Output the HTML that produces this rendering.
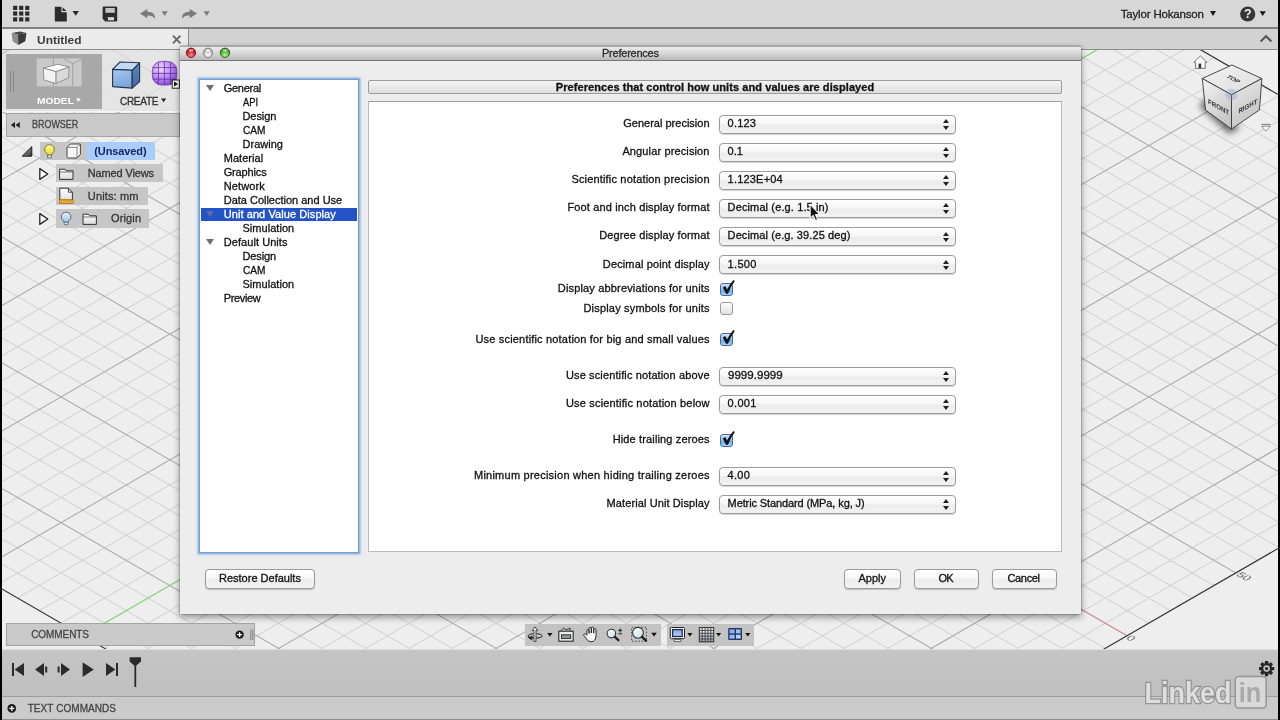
<!DOCTYPE html>
<html lang="en"><head><meta charset="utf-8"><title>Preferences</title>
<style>
html,body{margin:0;padding:0}
body{width:1280px;height:720px;overflow:hidden;background:#000;position:relative;font-family:"Liberation Sans",sans-serif;font-size:11px;color:#1a1a1a}
.abs{position:absolute}
.t{position:absolute;white-space:pre;line-height:1;transform-origin:0 50%}
.t.d{-webkit-text-stroke:0.3px currentColor}
.t.s{-webkit-text-stroke:0.28px currentColor}
#txt{position:absolute;left:0;top:0;width:1280px;height:720px;will-change:transform}
svg{will-change:transform}
#canvas{position:absolute;left:2px;top:49px;width:1276px;height:601px;background:#eeeeee;overflow:hidden}
#topbar{position:absolute;left:2px;top:0;width:1276px;height:27px;background:#d7d7d7}
#topline{position:absolute;left:2px;top:27px;width:1276px;height:2px;background:#7f7f7f}
#tabbar{position:absolute;left:2px;top:29px;width:1276px;height:20px;background:#d2d2d2;border-bottom:1px solid #8c8c8c}
#tab{position:absolute;left:2px;top:29px;width:186px;height:20px;background:#ebebeb;border-right:1px solid #8a8a8a}
#ribbon{position:absolute;left:2px;top:50px;width:900px;height:61px;background:rgba(226,226,226,.8);border-bottom:1px solid rgba(250,250,250,.8)}
#modelbtn{position:absolute;left:6.2px;top:54px;width:95.8px;height:55px;background:#a8a8a8}
.bar{position:absolute;background:#c9c9c9;border:1px solid #a4a4a4;box-sizing:border-box}
.chip{position:absolute;background:#c6c6c6}
#timeline{position:absolute;left:2px;top:649px;width:1276px;height:48px;box-sizing:border-box;background:linear-gradient(#c5c5c5,#bfbfbf);border-top:1px solid #dedede}
#tlline{position:absolute;left:2px;top:696px;width:1276px;height:1px;background:#9d9d9d}
#textcmd{position:absolute;left:2px;top:697px;width:1276px;height:22px;background:#cbcbcb}
#botline{position:absolute;left:2px;top:719px;width:1276px;height:1px;background:#8e8e8e}
#dialog{position:absolute;left:180px;top:46px;width:901px;height:568px;background:#ededed;box-shadow:0 3px 7px rgba(0,0,0,.42),0 0 1.5px rgba(0,0,0,.55)}
#dtitle{position:absolute;left:0;top:0;width:901px;height:14px;background:linear-gradient(#ececec 0%,#d6d6d6 50%,#b8b8b8 100%);border-bottom:1px solid #777;border-top:1px solid #a8a8a8;box-sizing:border-box;height:15px}
#tree{position:absolute;left:199px;top:79px;width:160px;height:474px;box-sizing:border-box;background:#fff;border:1.5px solid #6f9dd5;box-shadow:0 0 0 1.5px rgba(125,168,222,.6),0 0 3px 1px rgba(125,168,222,.5)}
#sel{position:absolute;left:201px;top:207.5px;width:156px;height:13.5px;background:#2453c8}
#hdr{position:absolute;left:368px;top:80px;width:694px;height:14px;box-sizing:border-box;background:linear-gradient(#f4f4f4,#dedede);border:1px solid #9b9b9b;border-radius:2px}
#panel{position:absolute;left:368px;top:101px;width:694px;height:451px;box-sizing:border-box;background:#fff;border:1px solid #b9b9b9;border-top-color:#9f9f9f}
.sel{position:absolute;left:719px;width:237px;height:19px;box-sizing:border-box;border:1px solid #9c9c9c;border-radius:4px;background:linear-gradient(#ffffff 0%,#f6f6f6 45%,#ececec 55%,#f2f2f2 100%);box-shadow:0 1px 1px rgba(0,0,0,.18)}
.sel:before{content:"";position:absolute;right:5.6px;top:3.4px;border:3px solid transparent;border-top:0;border-bottom:4.2px solid #222}
.sel:after{content:"";position:absolute;right:5.6px;top:10px;border:3px solid transparent;border-bottom:0;border-top:4.2px solid #222}
.btn{position:absolute;top:569px;height:19.5px;box-sizing:border-box;border:1px solid #9a9a9a;border-radius:4px;background:linear-gradient(#ffffff 0%,#f7f7f7 45%,#ececec 55%,#f3f3f3 100%);box-shadow:0 1px 1px rgba(0,0,0,.2)}
.cb{position:absolute;left:720px;width:13px;height:13px;box-sizing:border-box;border-radius:3px}
.cb.on{border:1px solid #46679e;background:linear-gradient(#cfe6fb 0%,#8fc3f3 50%,#5fa8ea 51%,#9ed2f8 100%)}
.cb.off{border:1px solid #9a9a9a;background:linear-gradient(#fdfdfd,#e2e2e2)}
.tri{position:absolute;width:0;height:0;border-left:4.2px solid transparent;border-right:4.2px solid transparent;border-top:6px solid #6e6e6e}
</style></head><body>
<div id="canvas">
<svg class="abs" style="left:-2px;top:-49px" width="1280" height="720" viewBox="0 0 1280 720">
<clipPath id="gclip"><polygon points="604.9,-294.4 1670.9,321.5 604.9,937.5 -461.1,321.5"/></clipPath>
<g clip-path="url(#gclip)">
<path d="M-10 -624.5L1290 126.6M-10 -599.4L1290 151.7M-10 -574.3L1290 176.9M-10 -549.1L1290 202.0M-10 -498.8L1290 252.3M-10 -473.7L1290 277.4M-10 -448.6L1290 302.6M-10 -423.4L1290 327.7M-10 -373.1L1290 378.0M-10 -348.0L1290 403.1M-10 -322.9L1290 428.3M-10 -297.7L1290 453.4M-10 -247.4L1290 503.7M-10 -222.3L1290 528.8M-10 -197.2L1290 554.0M-10 -172.0L1290 579.1M-10 -121.7L1290 629.4M-10 -96.6L1290 654.5M-10 -71.5L1290 679.7M-10 -46.3L1290 704.8M-10 4.0L1290 755.1M-10 29.1L1290 780.2M-10 54.2L1290 805.4M-10 79.4L1290 830.5M-10 129.7L1290 880.8M-10 154.8L1290 905.9M-10 179.9L1290 931.1M-10 205.1L1290 956.2M-10 255.4L1290 1006.5M-10 280.5L1290 1031.6M-10 305.6L1290 1056.8M-10 330.8L1290 1081.9M-10 381.1L1290 1132.2M-10 406.2L1290 1157.3M-10 431.3L1290 1182.5M-10 456.5L1290 1207.6M-10 506.8L1290 1257.9M-10 531.9L1290 1283.0M-10 557.0L1290 1308.2M-10 86.0L1290 -665.1M-10 111.2L1290 -640.0M-10 136.3L1290 -614.8M-10 161.4L1290 -589.7M-10 211.7L1290 -539.4M-10 236.9L1290 -514.3M-10 262.0L1290 -489.1M-10 287.1L1290 -464.0M-10 337.4L1290 -413.7M-10 362.6L1290 -388.6M-10 387.7L1290 -363.4M-10 412.8L1290 -338.3M-10 463.1L1290 -288.0M-10 488.3L1290 -262.9M-10 513.4L1290 -237.7M-10 538.5L1290 -212.6M-10 588.8L1290 -162.3M-10 614.0L1290 -137.2M-10 639.1L1290 -112.0M-10 664.2L1290 -86.9M-10 714.5L1290 -36.6M-10 739.7L1290 -11.5M-10 764.8L1290 13.7M-10 789.9L1290 38.8M-10 840.2L1290 89.1M-10 865.4L1290 114.2M-10 890.5L1290 139.4M-10 915.6L1290 164.5M-10 965.9L1290 214.8M-10 991.1L1290 239.9M-10 1016.2L1290 265.1M-10 1041.3L1290 290.2M-10 1091.6L1290 340.5M-10 1116.8L1290 365.6M-10 1141.9L1290 390.8M-10 1167.0L1290 415.9M-10 1217.3L1290 466.2M-10 1242.5L1290 491.3M-10 1267.6L1290 516.5" stroke="#d4d4d4" stroke-width="1.1" fill="none"/>
<path d="M-10 -524.0L1290 227.1M-10 -398.3L1290 352.8M-10 -272.6L1290 478.5M-10 -146.9L1290 604.2M-10 -21.2L1290 729.9M-10 104.5L1290 855.6M-10 230.2L1290 981.3M-10 355.9L1290 1107.0M-10 481.6L1290 1232.7M-10 186.6L1290 -564.5M-10 312.3L1290 -438.8M-10 438.0L1290 -313.1M-10 563.7L1290 -187.4M-10 689.4L1290 -61.7M-10 815.1L1290 64.0M-10 940.8L1290 189.7M-10 1066.5L1290 315.4M-10 1192.2L1290 441.1" stroke="#acacac" stroke-width="1.1" fill="none"/>
<path d="M604.9 334.1L1290 729.9M604.9 334.1L-10 -21.2" stroke="#ea7a86" stroke-width="0.95" fill="none"/>
<path d="M-10 689.4L1290 -61.7" stroke="#86e776" stroke-width="1.1" fill="none"/>
</g>
<polygon points="604.9,-294.4 1670.9,321.5 604.9,937.5 -461.1,321.5" fill="none" stroke="#333" stroke-width="1.15"/>

<defs>
<linearGradient id="gcT" x1="0" y1="0" x2="1" y2="1"><stop offset="0" stop-color="#f2f2f2"/><stop offset="1" stop-color="#dcdcdc"/></linearGradient>
<linearGradient id="gcF" x1="0" y1="0" x2="0.6" y2="1"><stop offset="0" stop-color="#f4f4f4"/><stop offset="1" stop-color="#c6c6c6"/></linearGradient>
<linearGradient id="gcR" x1="0" y1="0" x2="0.4" y2="1"><stop offset="0" stop-color="#ececec"/><stop offset="1" stop-color="#c2c2c2"/></linearGradient>
<filter id="blur3" x="-50%" y="-50%" width="200%" height="200%"><feGaussianBlur stdDeviation="3"/></filter>
</defs>
<!-- ruler labels -->
<g font-family="Liberation Sans, sans-serif" font-size="12" fill="#5c5c5c">
<text transform="matrix(0.8 0.46 -0.72 0.46 1125.6 638.6)">0</text>
<text transform="matrix(0.8 0.46 -0.72 0.46 1235.8 575.2)">50</text>
</g>
<!-- view cube -->
<path d="M1199 106L1229 134L1240 128L1207 98Z" fill="#333" opacity="0.7" filter="url(#blur3)"/>
<g stroke="#383838" stroke-width="0.9" stroke-linejoin="round">
<path d="M1231.9 65L1261.9 78.5L1231.5 94.75L1202.25 78.5Z" fill="url(#gcT)"/>
<path d="M1202.25 78.5L1231.5 94.75V129L1205.6 110Z" fill="url(#gcF)"/>
<path d="M1231.5 94.75L1261.9 78.5L1259.4 110L1231.5 129Z" fill="url(#gcR)"/>
</g>
<circle cx="1231.5" cy="94.6" r="6" fill="#7f96c4" opacity="0.33"/>
<g font-family="Liberation Sans, sans-serif" font-weight="bold" font-size="7" fill="#333">
<text transform="matrix(0.82 0.45 -0.82 0.44 1225.6 77)">TOP</text>
<text transform="matrix(0.876 0.482 0 1 1208 103.6)">FRONT</text>
<text transform="matrix(0.876 -0.482 0 1 1238.4 113.8)">RIGHT</text>
</g>
<!-- home -->
<path d="M1200.4 56L1207 62.4H1205.2V68.4H1195.6V62.4H1193.8Z" fill="#fafafa" stroke="#666" stroke-width="0.9" stroke-linejoin="round"/>
<rect x="1198.6" y="63.6" width="2.6" height="4.6" fill="#333"/>
<!-- cube menu -->
<path d="M1261.4 124.4H1270.4" stroke="#777" stroke-width="1"/><path d="M1261.6 126.2H1270.2L1265.9 131.2Z" fill="#fafafa" stroke="#777" stroke-width="0.8"/>

</svg>
</div>
<div id="topbar"></div><div id="topline"></div>
<div id="tabbar"></div><div id="tab"></div>
<div id="ribbon"></div><div id="modelbtn"></div>
<div class="bar" style="left:6px;top:113px;width:174px;height:24px"></div>
<div class="chip" style="left:39.5px;top:142px;width:47px;height:18px"></div>
<div class="chip" style="left:86.5px;top:142px;width:68.5px;height:18px;background:#a9cdf8"></div>
<div class="chip" style="left:56px;top:164.3px;width:107px;height:18.2px"></div>
<div class="chip" style="left:56px;top:186.9px;width:92px;height:18px"></div>
<div class="chip" style="left:56px;top:209px;width:93px;height:18.6px"></div>
<svg class="abs" style="left:0;top:0" width="1280" height="260" viewBox="0 0 1280 260">
<defs>
<linearGradient id="gBulbY" x1="0" y1="0" x2="0" y2="1"><stop offset="0" stop-color="#fff79a"/><stop offset="1" stop-color="#f0d92a"/></linearGradient>
<linearGradient id="gBulbB" x1="0" y1="0" x2="0" y2="1"><stop offset="0" stop-color="#e4f0ff"/><stop offset="1" stop-color="#9fc3ee"/></linearGradient>
<linearGradient id="gFold" x1="0" y1="0" x2="0" y2="1"><stop offset="0" stop-color="#ffffff"/><stop offset="1" stop-color="#d9d9d9"/></linearGradient>
<radialGradient id="gPur" cx="0.35" cy="0.3" r="0.8"><stop offset="0" stop-color="#efdcff"/><stop offset="0.55" stop-color="#bb85f0"/><stop offset="1" stop-color="#7d3fc8"/></radialGradient>
<linearGradient id="gTri" x1="0" y1="0" x2="1" y2="1"><stop offset="0" stop-color="#bbb"/><stop offset="1" stop-color="#333"/></linearGradient>
<linearGradient id="gCubeF" x1="0" y1="0" x2="0.3" y2="1"><stop offset="0" stop-color="#a9c9ef"/><stop offset="1" stop-color="#79a5da"/></linearGradient><linearGradient id="gCubeR" x1="0" y1="0" x2="0" y2="1"><stop offset="0" stop-color="#5d87bf"/><stop offset="1" stop-color="#40699f"/></linearGradient>
</defs>
<!-- top bar: app grid -->
<g fill="#2b2b2b">
<rect x="13.1" y="5.8" width="4.15" height="4.15"/><rect x="19.15" y="5.8" width="4.15" height="4.15"/><rect x="25.2" y="5.8" width="4.15" height="4.15"/><rect x="13.1" y="11.45" width="4.15" height="4.15"/><rect x="19.15" y="11.45" width="4.15" height="4.15"/><rect x="25.2" y="11.45" width="4.15" height="4.15"/><rect x="13.1" y="17.3" width="4.15" height="4.15"/><rect x="19.15" y="17.3" width="4.15" height="4.15"/><rect x="25.2" y="17.3" width="4.15" height="4.15"/>
<!-- file -->
<path d="M54.8 6.8H61.4V12.2H66.8V21.4H54.8Z"/><path d="M62.5 7.2L66.4 11.1H62.5Z"/>
<path d="M72.4 11H79L75.7 15.8Z"/>
<!-- save -->
<path d="M102.6 7.8Q102.6 6.6 103.8 6.6H116Q117.2 6.6 117.2 7.8V20.2Q117.2 21.4 116 21.4H105.2L102.6 18.8Z"/>
</g>
<rect x="105.4" y="8" width="9.4" height="4.8" fill="#c4c4c4"/>
<rect x="106" y="17.2" width="8" height="3.1" fill="#d9d9d9"/><rect x="106" y="17.2" width="2" height="3.1" fill="#2b2b2b"/>
<!-- undo / redo -->
<g fill="#7b7b7b">
<path d="M140 13.6L147.3 9V11.8Q155.5 11.6 155 19Q153 15.4 147.3 15.6V18.2Z"/>
<path d="M161.6 11.3H167.8L164.7 16Z"/>
<path d="M197 13.6L189.7 9V11.8Q181.5 11.6 182 19Q184 15.4 189.7 15.6V18.2Z"/>
<path d="M203.6 11.3H209.8L206.7 16Z"/>
</g>
<!-- user / help -->
<path d="M1210 11H1216L1213 16Z" fill="#1a1a1a"/>
<circle cx="1247.7" cy="14" r="7.6" fill="#353535"/>
<text x="1247.7" y="18.4" text-anchor="middle" font-family="Liberation Sans, sans-serif" font-weight="bold" font-size="12.5" fill="#f2f2f2">?</text>
<path d="M1259.6 11.2H1265.8L1262.7 16Z" fill="#1a1a1a"/>
<path d="M1260.6 41.4L1266 36.2L1271.4 41.4" fill="none" stroke="#555" stroke-width="2.1"/>
<!-- tab -->
<path d="M11.7 32.9L20.2 31.4L26.5 32.9L18 34.6Z" fill="#454545"/><path d="M11.7 32.9L18 34.6L18.3 44.9L12.7 41.3Z" fill="#8d8d8d"/><path d="M18 34.6L26.5 32.9L25.3 41.3L18.3 44.9Z" fill="#3a3a3a"/>
<path d="M173 35.6L180.4 43.4M180.4 35.6L173 43.4" stroke="#6a6a6a" stroke-width="2" fill="none"/>
<!-- ribbon -->
<path d="M10.5 71V92M13.6 71V92" stroke="#868686" stroke-width="1" fill="none"/>
<rect x="36.7" y="58.4" width="44.9" height="27.9" fill="#cacaca"/>
<path d="M53.4 58.4V86.3M63.8 58.6L72.7 63.6V86.2M72.7 63.6L81.4 59.6" stroke="#a0a0a0" stroke-width="1" fill="none"/>
<g stroke="#8a8a8a" stroke-width="0.9" stroke-linejoin="round">
<path d="M43.3 68L56.1 71.5V83.6L43.8 79.9Z" fill="#f3f3f3"/>
<path d="M56.1 71.5L69 67L68.6 77.7L56.1 83.6Z" fill="#dadada"/>
<path d="M43.3 68L57.9 64.3L69 67L56.1 71.5Z" fill="#ffffff"/>
</g>
<path d="M76 98.6H80.8L78.4 102Z" fill="#fff"/>
<path d="M161 98.4H166.2L163.6 102.2Z" fill="#222"/>
<!-- create box -->
<g stroke="#22344f" stroke-width="1.1" stroke-linejoin="round">
<path d="M112.6 69.4L120 62L139.6 62.8L132.2 70.3Z" fill="#c3daf4"/>
<path d="M112.6 69.4L132.2 70.3V88.1L112.6 86.6Z" fill="url(#gCubeF)"/>
<path d="M132.2 70.3L139.6 62.8V81.6L132.2 88.1Z" fill="url(#gCubeR)"/>
</g>
<!-- purple form -->
<rect x="152.4" y="61.4" width="24.4" height="23.6" rx="9" ry="9" fill="url(#gPur)" stroke="#6b35ad" stroke-width="0.8"/>
<path d="M158.4 62.2V84.4M164.4 61.6V85M170.6 62V84.6M152.8 67.6H176.4M152.6 73.4H176.8M152.8 79.2H176.4" stroke="#5a2a9c" stroke-width="0.9" fill="none" opacity="0.85"/>
<rect x="172.2" y="80" width="7.2" height="8.2" fill="#f4f4f4" stroke="#111" stroke-width="0.9"/><path d="M174 81.6L178 84.1L174 86.6Z" fill="#111"/>
<!-- browser header -->
<path d="M15 122L10.8 125L15 128ZM19.8 122L15.6 125L19.8 128Z" fill="#222"/>
<!-- row 1 -->
<path d="M31.8 146.6V156.2H22.2Z" fill="url(#gTri)" stroke="#222" stroke-width="1"/>
<g>
<path d="M49.5 144.6a4.8 4.8 0 0 1 2.6 8.9l-0.4 1.6h-4.4l-0.4-1.6a4.8 4.8 0 0 1 2.6-8.9z" fill="url(#gBulbY)" stroke="#6a6a40" stroke-width="0.9"/>
<path d="M47.5 155.2h4v2.6h-4z" fill="#e9e4ee" stroke="#666" stroke-width="0.8"/>
</g>
<path d="M67 147.4L70.4 144H80.4V154.4L77 158H68.2Q67 158 67 156.8Z" fill="#f7f7f7" stroke="#444" stroke-width="1"/>
<path d="M67.4 147.4H77V157.8M77 147.4L80.2 144.2" fill="none" stroke="#777" stroke-width="0.9"/>
<!-- row 2 -->
<path d="M39.8 168.6L47.8 174L39.8 179.4Z" fill="#fff" stroke="#222" stroke-width="1.3" stroke-linejoin="round"/>
<path d="M59.6 169.2H65L66.2 170.8H73V179.4H59.6Z" fill="url(#gFold)" stroke="#333" stroke-width="1"/><path d="M59.6 172H73" stroke="#555" stroke-width="0.8"/>
<!-- row 3 -->
<path d="M59.8 188.2H68.4L72.4 192.2V202.8H59.8Z" fill="url(#gFold)" stroke="#333" stroke-width="1"/><path d="M68.4 188.2V192.2H72.4" fill="none" stroke="#333" stroke-width="0.9"/>
<rect x="59.2" y="199.6" width="14" height="3.6" fill="#f2b632" stroke="#a56a10" stroke-width="0.7"/><path d="M61.5 199.8V201.4M64 199.8V201.4M66.5 199.8V201.4M69 199.8V201.4M71.4 199.8V201.4" stroke="#7a4a08" stroke-width="0.6"/>
<!-- row 4 -->
<path d="M39.8 213.6L47.8 219L39.8 224.4Z" fill="#fff" stroke="#222" stroke-width="1.3" stroke-linejoin="round"/>
<path d="M66.1 212.1a4.7 4.7 0 0 1 2.6 8.7l-0.4 1.5h-4.4l-0.4-1.5a4.7 4.7 0 0 1 2.6-8.7z" fill="url(#gBulbB)" stroke="#4a6080" stroke-width="0.9"/>
<path d="M64.2 222.3h3.8v2.4h-3.8z" fill="#e6eaf2" stroke="#566" stroke-width="0.8"/>
<path d="M83 214.2H88.4L89.6 215.8H96.4V224.4H83Z" fill="url(#gFold)" stroke="#333" stroke-width="1"/><path d="M83 217H96.4" stroke="#555" stroke-width="0.8"/>
</svg>

<div id="timeline"></div><div id="tlline"></div><div id="textcmd"></div><div id="botline"></div>
<div class="bar" style="left:6px;top:622.5px;width:249px;height:23px"></div>
<div class="chip" style="left:524.5px;top:623.5px;width:136px;height:22px;background:#c3c3c3"></div>
<div class="chip" style="left:667px;top:623.5px;width:87px;height:22px;background:#c3c3c3"></div>
<svg class="abs" style="left:0;top:600px" width="1280" height="120" viewBox="0 600 1280 120">
<defs>
<linearGradient id="gLens" x1="0" y1="0" x2="1" y2="1"><stop offset="0" stop-color="#ffffff"/><stop offset="1" stop-color="#bfe0e8"/></linearGradient>
<linearGradient id="gMon" x1="0" y1="0" x2="0" y2="1"><stop offset="0" stop-color="#86aae3"/><stop offset="1" stop-color="#b4cdf2"/></linearGradient>
<linearGradient id="gGridI" x1="0" y1="0" x2="0" y2="1"><stop offset="0" stop-color="#ffffff"/><stop offset="1" stop-color="#a9a9b4"/></linearGradient>
</defs>
<!-- comments -->
<circle cx="239.6" cy="634.6" r="4.2" fill="#1c1c1c"/><path d="M237.2 634.6H242M239.6 632.2V637" stroke="#fff" stroke-width="1.3"/>
<path d="M250.8 629.5V640M252.8 629.5V640" stroke="#8d8d8d" stroke-width="1.2"/>
<!-- orbit -->
<g fill="none" stroke="#222" stroke-width="1">
<path d="M536.6 633.6Q542.2 634.2 542.2 635.8Q542 638 535 638.1Q528.4 638 527.9 636Q528 634.4 533.2 633.6"/>
<path d="M532.4 636.2L528.2 637.4L531.6 640Z" fill="#222" stroke-width="0.6"/>
<path d="M534 641.4V630.4H532.2L535 626.9L537.8 630.4H536V641.4Z" fill="#f4f4f4" stroke-width="0.8" stroke-linejoin="round"/>
</g>
<path d="M547.2 633H552.6L549.9 636.4Z" fill="#111"/>
<!-- look at -->
<g fill="none" stroke="#2a2a2a">
<path d="M560.8 631L563.6 627.9L565.8 629.8L570.1 628.2V631" stroke-width="0.9"/>
<rect x="558.8" y="631.2" width="14.4" height="10" fill="#ececec" stroke-width="1.1"/>
<rect x="561.5" y="634.8" width="9.2" height="3.8" fill="#8b9997" stroke-width="0.9"/>
</g>
<!-- hand -->
<path d="M586.9 635.2V630.6Q587 629.5 587.9 629.5Q588.9 629.5 589 630.6V633.4V628.6Q589.1 627.5 590.1 627.5Q591.2 627.5 591.3 628.6V633V628.2Q591.4 627.1 592.5 627.1Q593.6 627.1 593.7 628.2V633.2V629.6Q593.8 628.6 594.8 628.6Q595.9 628.6 596 629.8V635.6Q596 638.4 594.8 640Q593.6 641.7 591.2 641.7Q588.6 641.7 587.2 639.8L583.8 635.4Q583.3 634.4 584.2 633.9Q585.2 633.5 586 634.4Z" fill="#fbfbfb" stroke="#222" stroke-width="0.95" stroke-linejoin="round"/>
<!-- zoom -->
<circle cx="611.4" cy="633.6" r="4.3" fill="url(#gLens)" stroke="#333" stroke-width="1.1"/><path d="M614.8 636.8L618.4 640.2" stroke="#222" stroke-width="2.3" stroke-linecap="round"/>
<path d="M618.2 630.4H622.2M620.2 628.4V632.4M618.3 633.8H622.1" stroke="#222" stroke-width="1"/>
<!-- zoom window -->
<rect x="631.6" y="627.3" width="14.9" height="13.9" fill="none" stroke="#444" stroke-width="0.9" stroke-dasharray="1.6 1.6"/>
<circle cx="638" cy="632.8" r="5.4" fill="url(#gLens)" stroke="#333" stroke-width="1.1"/><path d="M642 636.8L646 640.6" stroke="#222" stroke-width="2.5" stroke-linecap="round"/>
<path d="M651.2 632.8H656.8L654 636.4Z" fill="#111"/>
<!-- display -->
<rect x="670.3" y="627.5" width="14.2" height="11.2" rx="1.2" fill="#f6f6f6" stroke="#222" stroke-width="1"/>
<rect x="672.6" y="629.6" width="9.6" height="6.9" fill="url(#gMon)" stroke="#1c2c55" stroke-width="1.3"/>
<path d="M674.2 639.6H680.8V641.6H674.2Z" fill="#fafafa" stroke="#333" stroke-width="0.7"/>
<path d="M687.3 633H692.5L689.9 636.4Z" fill="#111"/>
<!-- grid -->
<rect x="699.3" y="627.6" width="14.4" height="14.2" fill="url(#gGridI)" stroke="#2a2a2a" stroke-width="1"/>
<path d="M702.2 627.6V641.8M705.1 627.6V641.8M707.9 627.6V641.8M710.8 627.6V641.8M699.3 630.4H713.7M699.3 633.3H713.7M699.3 636.1H713.7M699.3 639H713.7" stroke="#3c3c46" stroke-width="0.9"/>
<path d="M716 633H721.2L718.6 636.4Z" fill="#111"/>
<!-- viewports -->
<rect x="728.2" y="628" width="13.8" height="12" rx="1" fill="#1f3868"/>
<g>
<rect x="729.6" y="629.4" width="5" height="4" fill="#8fb2e6"/><rect x="736" y="629.4" width="4.6" height="4" fill="#9dbdec"/><rect x="729.6" y="634.8" width="5" height="3.8" fill="#9dbdec"/><rect x="736" y="634.8" width="4.6" height="3.8" fill="#b9d3f6"/>
</g>
<path d="M745.2 633H750.4L747.8 636.4Z" fill="#111"/>
<!-- timeline controls -->
<g fill="#2b2b2b">
<path d="M12 663H14V676H12ZM24 663V676L14.6 669.5Z"/>
<path d="M35 669.5L44 663V676ZM45.2 666.4H47.2V672.6H45.2Z"/>
<path d="M70 669.5L61 663V676ZM57.6 666.4H59.6V672.6H57.6Z"/>
<path d="M82.6 662.2L93.8 669.5L82.6 677Z"/>
<path d="M106 663L115.4 669.5L106 676ZM116 663H118V676H116Z"/>
<path d="M129.6 657.2H141V661.6L136.4 665.6H134.2L129.6 661.6Z"/>
<rect x="134.4" y="663" width="1.8" height="24"/>
</g>
<!-- text commands plus -->
<circle cx="11.8" cy="708.4" r="4.3" fill="#1c1c1c"/><path d="M9.3 708.4H14.3M11.8 705.9V710.9" stroke="#fff" stroke-width="1.3"/>
<!-- gear -->
<g transform="translate(1266.6 668.6)" fill="#262626">
<g id="teeth"><rect x="-1.7" y="-7.6" width="3.4" height="15.2" rx="0.6"/><rect x="-1.7" y="-7.6" width="3.4" height="15.2" rx="0.6" transform="rotate(45)"/><rect x="-1.7" y="-7.6" width="3.4" height="15.2" rx="0.6" transform="rotate(90)"/><rect x="-1.7" y="-7.6" width="3.4" height="15.2" rx="0.6" transform="rotate(135)"/></g>
<circle r="5.6"/><circle r="3.3" fill="#c2c2c2"/><circle r="1.6"/>
</g>
</svg>

<div id="dialog"><div id="dtitle"></div></div>
<svg class="abs" style="left:180px;top:46px" width="60" height="15" viewBox="180 46 60 15">
<defs>
<radialGradient id="tlR" cx="0.5" cy="0.75" r="0.7"><stop offset="0" stop-color="#ff8a8a"/><stop offset="0.55" stop-color="#dc2a38"/><stop offset="1" stop-color="#8e0f18"/></radialGradient>
<radialGradient id="tlG" cx="0.5" cy="0.75" r="0.7"><stop offset="0" stop-color="#b4f58c"/><stop offset="0.55" stop-color="#5cbf3a"/><stop offset="1" stop-color="#2a6f18"/></radialGradient>
<radialGradient id="tlN" cx="0.5" cy="0.75" r="0.7"><stop offset="0" stop-color="#fafafa"/><stop offset="0.6" stop-color="#c9c9c9"/><stop offset="1" stop-color="#8a8a8a"/></radialGradient>
</defs>
<circle cx="191" cy="52.8" r="4.7" fill="url(#tlR)" stroke="#7a1018" stroke-width="0.9"/><ellipse cx="191" cy="50.3" rx="2.6" ry="1.4" fill="#fff" opacity="0.55"/>
<circle cx="208" cy="52.8" r="4.7" fill="url(#tlN)" stroke="#808080" stroke-width="0.9"/><ellipse cx="208" cy="50.3" rx="2.6" ry="1.4" fill="#fff" opacity="0.7"/>
<circle cx="225" cy="52.8" r="4.7" fill="url(#tlG)" stroke="#2a5f18" stroke-width="0.9"/><ellipse cx="225" cy="50.3" rx="2.6" ry="1.4" fill="#fff" opacity="0.55"/>
</svg>
<div id="tree"></div><div id="sel"></div>
<div class="tri" style="left:205.9px;top:84.7px;border-top-color:#6e6e6e"></div>
<div class="tri" style="left:205.9px;top:210.7px;border-top-color:#5b6f9f"></div>
<div class="tri" style="left:205.9px;top:238.7px;border-top-color:#6e6e6e"></div>
<div id="hdr"></div><div id="panel"></div>
<div class="sel" style="top:114.6px"></div>
<div class="sel" style="top:142.8px"></div>
<div class="sel" style="top:170.9px"></div>
<div class="sel" style="top:199.0px"></div>
<div class="sel" style="top:227.2px"></div>
<div class="sel" style="top:255.3px"></div>
<div class="sel" style="top:366.8px"></div>
<div class="sel" style="top:394.9px"></div>
<div class="sel" style="top:467.0px"></div>
<div class="sel" style="top:495.1px"></div>
<div class="cb on" style="top:282.6px"><svg class="abs" style="left:-2px;top:-5px" width="18" height="18" viewBox="0 0 18 18"><path d="M3.8 8.6L6.3 6.9L8 10.6Q10.6 5 14.4 0.9L15.8 1.9Q11.8 7.2 8.9 14.8H7Z" fill="#111"/></svg></div>
<div class="cb off" style="top:302.2px"></div>
<div class="cb on" style="top:333.3px"><svg class="abs" style="left:-2px;top:-5px" width="18" height="18" viewBox="0 0 18 18"><path d="M3.8 8.6L6.3 6.9L8 10.6Q10.6 5 14.4 0.9L15.8 1.9Q11.8 7.2 8.9 14.8H7Z" fill="#111"/></svg></div>
<div class="cb on" style="top:433.8px"><svg class="abs" style="left:-2px;top:-5px" width="18" height="18" viewBox="0 0 18 18"><path d="M3.8 8.6L6.3 6.9L8 10.6Q10.6 5 14.4 0.9L15.8 1.9Q11.8 7.2 8.9 14.8H7Z" fill="#111"/></svg></div>
<div class="btn" style="left:205px;width:110px"></div>
<div class="btn" style="left:844px;width:56.5px"></div>
<div class="btn" style="left:914px;width:64.5px"></div>
<div class="btn" style="left:992px;width:64.5px"></div>
<div id="txt">
<span class="t s" style="left:1120.7px;top:8.7px;font-size:11.5px;color:#222;letter-spacing:-0.168px;">Taylor Hokanson</span>
<span class="t" style="left:36.5px;top:34.6px;font-size:11px;font-weight:bold;color:#3c3c3c;transform:scaleX(1.087);">Untitled</span>
<span class="t" style="left:36.7px;top:95.8px;font-size:9.5px;font-weight:bold;color:#fff;transform:scaleX(1.075);">MODEL</span>
<span class="t s" style="left:120.0px;top:96.7px;font-size:10px;color:#2e2e2e;letter-spacing:-0.286px;">CREATE</span>
<span class="t s" style="left:31.5px;top:120.1px;font-size:10px;color:#444;transform:scaleX(0.896);">BROWSER</span>
<span class="t" style="left:94.3px;top:145.9px;font-size:11px;font-weight:bold;color:#17256b;letter-spacing:-0.111px;">(Unsaved)</span>
<span class="t s" style="left:87.8px;top:168.4px;font-size:11px;color:#333;letter-spacing:-0.142px;">Named Views</span>
<span class="t s" style="left:87.8px;top:190.9px;font-size:11px;color:#333;letter-spacing:0.144px;">Units: mm</span>
<span class="t s" style="left:111.0px;top:213.4px;font-size:11px;color:#333;letter-spacing:0.131px;">Origin</span>
<span class="t s" style="left:31.2px;top:629.7px;font-size:10px;color:#444;letter-spacing:-0.078px;">COMMENTS</span>
<span class="t s" style="left:27.7px;top:703.7px;font-size:10px;color:#444;letter-spacing:0.058px;">TEXT COMMANDS</span>
<span class="t d" style="left:602.0px;top:47.9px;font-size:11px;color:#2a2a2a;letter-spacing:-0.231px;">Preferences</span>
<span class="t d" style="left:223.7px;top:82.9px;font-size:11px;color:#111;letter-spacing:-0.257px;">General</span>
<span class="t d" style="left:242.5px;top:96.9px;font-size:11px;color:#111;transform:scaleX(0.851);">API</span>
<span class="t d" style="left:242.5px;top:110.9px;font-size:11px;color:#111;letter-spacing:-0.090px;">Design</span>
<span class="t d" style="left:242.5px;top:124.9px;font-size:11px;color:#111;transform:scaleX(0.920);">CAM</span>
<span class="t d" style="left:242.5px;top:138.9px;font-size:11px;color:#111;letter-spacing:0.023px;">Drawing</span>
<span class="t d" style="left:223.7px;top:152.9px;font-size:11px;color:#111;letter-spacing:0.054px;">Material</span>
<span class="t d" style="left:223.7px;top:166.9px;font-size:11px;color:#111;letter-spacing:-0.147px;">Graphics</span>
<span class="t d" style="left:223.7px;top:180.9px;font-size:11px;color:#111;letter-spacing:0.109px;">Network</span>
<span class="t d" style="left:223.7px;top:194.9px;font-size:11px;color:#111;letter-spacing:-0.006px;">Data Collection and Use</span>
<span class="t d" style="left:223.7px;top:208.9px;font-size:11px;color:#fff;letter-spacing:0.078px;">Unit and Value Display</span>
<span class="t d" style="left:242.5px;top:222.9px;font-size:11px;color:#111;letter-spacing:0.038px;">Simulation</span>
<span class="t d" style="left:223.7px;top:236.9px;font-size:11px;color:#111;letter-spacing:0.068px;">Default Units</span>
<span class="t d" style="left:242.5px;top:250.9px;font-size:11px;color:#111;letter-spacing:-0.110px;">Design</span>
<span class="t d" style="left:242.5px;top:264.9px;font-size:11px;color:#111;transform:scaleX(0.920);">CAM</span>
<span class="t d" style="left:242.5px;top:278.9px;font-size:11px;color:#111;letter-spacing:0.038px;">Simulation</span>
<span class="t d" style="left:223.7px;top:292.9px;font-size:11px;color:#111;letter-spacing:-0.337px;">Preview</span>
<span class="t d" style="left:555.8px;top:82.2px;font-size:11px;font-weight:bold;color:#111;letter-spacing:0.072px;">Preferences that control how units and values are displayed</span>
<span class="t d" style="left:623.3px;top:117.9px;font-size:11px;color:#111;">General precision</span>
<span class="t d" style="left:622.4px;top:146.0px;font-size:11px;color:#111;letter-spacing:0.131px;">Angular precision</span>
<span class="t d" style="left:571.4px;top:174.1px;font-size:11px;color:#111;letter-spacing:0.172px;">Scientific notation precision</span>
<span class="t d" style="left:567.4px;top:202.3px;font-size:11px;color:#111;letter-spacing:0.145px;">Foot and inch display format</span>
<span class="t d" style="left:599.2px;top:230.4px;font-size:11px;color:#111;letter-spacing:0.132px;">Degree display format</span>
<span class="t d" style="left:602.8px;top:258.5px;font-size:11px;color:#111;letter-spacing:0.138px;">Decimal point display</span>
<span class="t d" style="left:557.8px;top:283.4px;font-size:11px;color:#111;letter-spacing:0.165px;">Display abbreviations for units</span>
<span class="t d" style="left:583.5px;top:303.1px;font-size:11px;color:#111;letter-spacing:0.181px;">Display symbols for units</span>
<span class="t d" style="left:475.5px;top:333.6px;font-size:11px;color:#111;letter-spacing:0.178px;">Use scientific notation for big and small values</span>
<span class="t d" style="left:566.0px;top:370.3px;font-size:11px;color:#111;letter-spacing:0.124px;">Use scientific notation above</span>
<span class="t d" style="left:566.0px;top:398.1px;font-size:11px;color:#111;letter-spacing:0.168px;">Use scientific notation below</span>
<span class="t d" style="left:612.7px;top:434.3px;font-size:11px;color:#111;letter-spacing:0.139px;">Hide trailing zeroes</span>
<span class="t d" style="left:474.0px;top:470.3px;font-size:11px;color:#111;letter-spacing:0.239px;">Minimum precision when hiding trailing zeroes</span>
<span class="t d" style="left:606.6px;top:498.3px;font-size:11px;color:#111;letter-spacing:0.101px;">Material Unit Display</span>
<span class="t d" style="left:727.6px;top:117.9px;font-size:11px;color:#111;letter-spacing:0.217px;">0.123</span>
<span class="t d" style="left:727.6px;top:146.0px;font-size:11px;color:#111;letter-spacing:-0.048px;">0.1</span>
<span class="t d" style="left:727.6px;top:174.1px;font-size:11px;color:#111;letter-spacing:0.196px;">1.123E+04</span>
<span class="t d" style="left:727.6px;top:202.3px;font-size:11px;color:#111;letter-spacing:0.123px;">Decimal (e.g. 1.5 in)</span>
<span class="t d" style="left:727.6px;top:230.4px;font-size:11px;color:#111;letter-spacing:0.102px;">Decimal (e.g. 39.25 deg)</span>
<span class="t d" style="left:727.6px;top:258.5px;font-size:11px;color:#111;letter-spacing:0.317px;">1.500</span>
<span class="t d" style="left:727.6px;top:370.3px;font-size:11px;color:#111;transform:scaleX(1.052);">9999.9999</span>
<span class="t d" style="left:727.6px;top:398.1px;font-size:11px;color:#111;letter-spacing:0.317px;">0.001</span>
<span class="t d" style="left:727.6px;top:470.3px;font-size:11px;color:#111;letter-spacing:0.259px;">4.00</span>
<span class="t d" style="left:727.6px;top:498.3px;font-size:11px;color:#111;letter-spacing:-0.111px;">Metric Standard (MPa, kg, J)</span>
<span class="t d" style="left:219.0px;top:572.9px;font-size:11px;color:#111;">Restore Defaults</span>
<span class="t d" style="left:858.5px;top:572.9px;font-size:11px;color:#111;letter-spacing:-0.008px;">Apply</span>
<span class="t d" style="left:938.5px;top:572.9px;font-size:11px;color:#111;letter-spacing:-0.906px;">OK</span>
<span class="t d" style="left:1007.5px;top:572.9px;font-size:11px;color:#111;letter-spacing:-0.350px;">Cancel</span>
</div>
<svg class="abs" style="left:1130px;top:670px" width="150" height="50" viewBox="1130 670 150 50">
<g font-family="Liberation Sans, sans-serif" font-weight="bold">
<text x="1144.6" y="702.6" font-size="30" textLength="87" lengthAdjust="spacingAndGlyphs" fill="#e4e4e4" fill-opacity="0.9" stroke="#8b8b8b" stroke-opacity="0.85" stroke-width="2.6" paint-order="stroke">Linked</text>
<rect x="1235.2" y="676.4" width="31" height="31.6" rx="3.5" fill="#dcdcdc" fill-opacity="0.85" stroke="#8b8b8b" stroke-opacity="0.85" stroke-width="1.5"/>
<text x="1238.8" y="702" font-size="28" textLength="22.6" lengthAdjust="spacingAndGlyphs" fill="#a9a9a9">in</text>
</g>
</svg>
<!-- mouse cursor -->
<svg class="abs" style="left:806px;top:203px" width="16" height="20" viewBox="0 0 16 20"><path d="M4.2 1.6V15.2L7.3 12.3L9.5 17.4L11.6 16.5L9.4 11.5H13.6Z" fill="#111" stroke="#fff" stroke-width="1" stroke-linejoin="round"/></svg>

</body></html>
